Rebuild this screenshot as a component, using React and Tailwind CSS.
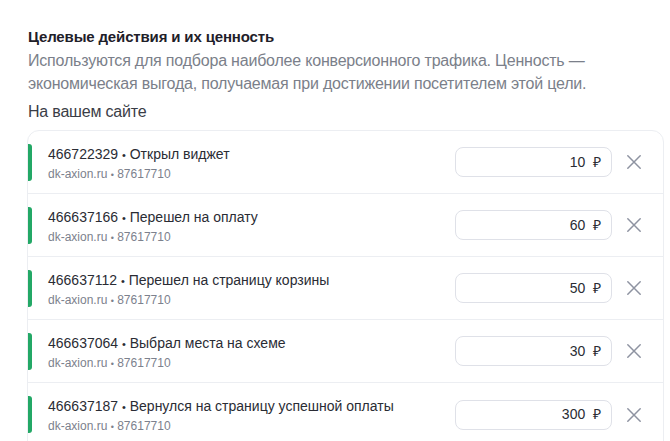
import React from "react";

const rows = [
  { id: "466722329", name: "Открыл виджет", value: "10" },
  { id: "466637166", name: "Перешел на оплату", value: "60" },
  { id: "466637112", name: "Перешел на страницу корзины", value: "50" },
  { id: "466637064", name: "Выбрал места на схеме", value: "30" },
  { id: "466637187", name: "Вернулся на страницу успешной оплаты", value: "300" },
];

function CloseIcon() {
  return (
    <svg width="16" height="16" viewBox="0 0 16 16" fill="none">
      <path d="M1.8 1.8L14.2 14.2M14.2 1.8L1.8 14.2" stroke="#8e93a1" strokeWidth="1.5" strokeLinecap="round" />
    </svg>
  );
}

export default function App() {
  return (
    <div
      className="w-[670px] h-[441px] overflow-hidden bg-white pl-[28px] pt-[27px]"
      style={{ fontFamily: '"Liberation Sans", Arial, sans-serif' }}
    >
      <h2 className="text-[15px] leading-[20px] font-bold tracking-[-0.15px] text-[#1f2029]">Целевые действия и их ценность</h2>
      <p className="mt-[2px] text-[16px] leading-[23px] tracking-[-0.2px] text-[#7b7f8a]">
        Используются для подбора наиболее конверсионного трафика. Ценность —
        <br />
        экономическая выгода, получаемая при достижении посетителем этой цели.
      </p>
      <p className="mt-[6px] text-[16px] leading-[22px] tracking-[-0.2px] text-[#3a3d46]">На вашем сайте</p>
      <div className="mt-[7px] -ml-px w-[637px] rounded-t-[12px] border border-[#eceef2]">
        {rows.map((r) => (
          <div key={r.id} className="flex h-[63px] items-start border-b border-[#eceef2] last:border-b-0">
            <div className="mt-[13px] h-[37px] w-[4px] shrink-0 rounded-r-[3px] bg-[#23a866]" />
            <div className="ml-[16px] flex-1 pt-[13px]">
              <div className="text-[14px] leading-[20px] text-[#2a2c34]">
                {r.id} <span className="text-[11px]">•</span> {r.name}
              </div>
              <div className="text-[12px] leading-[18px] text-[#7c818d]">
                dk-axion.ru <span className="text-[9px]">•</span> 87617710
              </div>
            </div>
            <div className="flex h-full items-center pr-[17px]">
              <div className="flex h-[30px] w-[157px] items-center justify-end rounded-[8px] border border-[#dfe1e8] pr-[10px] text-[14px] text-[#2a2c34]">
                {r.value}&nbsp;&nbsp;₽
              </div>
              <div className="ml-[10px] flex h-[24px] w-[24px] items-center justify-center">
                <CloseIcon />
              </div>
            </div>
          </div>
        ))}
      </div>
    </div>
  );
}
